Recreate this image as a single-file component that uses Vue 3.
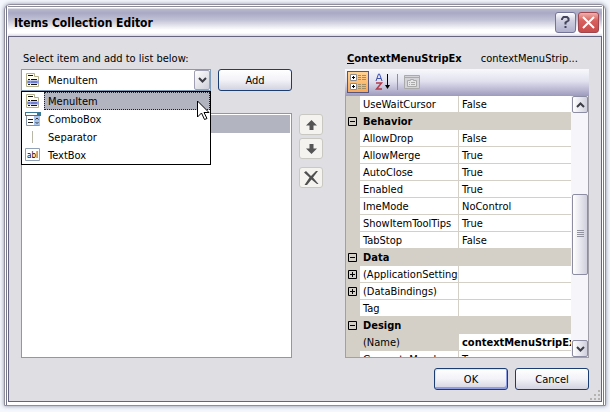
<script setup>
import { ref } from 'vue'

const kinds = [
  { name: 'MenuItem', icon: 'menu' },
  { name: 'ComboBox', icon: 'combo' },
  { name: 'Separator', icon: 'separator' },
  { name: 'TextBox', icon: 'text' },
]
const kind = ref('MenuItem')

const rows = [
  { name: 'UseWaitCursor', value: 'False' },
  { group: 'Behavior' },
  { name: 'AllowDrop', value: 'False' },
  { name: 'AllowMerge', value: 'True' },
  { name: 'AutoClose', value: 'True' },
  { name: 'Enabled', value: 'True' },
  { name: 'ImeMode', value: 'NoControl' },
  { name: 'ShowItemToolTips', value: 'True' },
  { name: 'TabStop', value: 'False' },
  { group: 'Data' },
  { name: '(ApplicationSettings)', value: '', expandable: true },
  { name: '(DataBindings)', value: '', expandable: true },
  { name: 'Tag', value: '' },
  { group: 'Design' },
  { name: '(Name)', value: 'contextMenuStripEx1', readonly: true },
  { name: 'GenerateMember', value: 'True' },
]
</script>

<template>
  <div class="desktop">
    <section class="dialog" role="dialog" aria-labelledby="dialog-title">
      <header class="titlebar">
        <h1 id="dialog-title">Items Collection Editor</h1>
        <button class="caption help" type="button" aria-label="Help">
          <svg width="9" height="13" viewBox="0 0 9 13" fill="none" stroke="#44445e" stroke-width="2">
            <path d="M1 4V3l1.500-2h3.500l1.500 1.500v2L4.500 6.500v2" /><path d="M3.500 11h2" />
          </svg>
        </button>
        <button class="caption close" type="button" aria-label="Close">
          <svg width="13" height="13" viewBox="0 0 13 13" fill="none" stroke="#fff" stroke-width="2">
            <path d="M1 1l11 11M12 1L1 12" />
          </svg>
        </button>
      </header>

      <div class="client">
        <main class="panes">
          <div class="left">
            <label class="caption-text" for="kind">Select item and add to list below:</label>
            <div class="picker">
              <div class="combo">
                <svg class="kind-icon" width="16" height="16" viewBox="0 0 16 16">
                  <path d="M1.500 1.500h8v3h4v10h-12z" fill="#fffef0" stroke="#b5b08c" />
                  <path d="M3 3.500h5M3 7.500h2M6 7.500h6M3 12.500h2M6 12.500h6" stroke="#111" />
                  <path d="M2 10h12" stroke="#8fa0e8" stroke-width="3" /><path d="M3 10h2M6 10h6" stroke="#4a58b8" />
                </svg>
                <select id="kind" v-model="kind">
                  <option v-for="k in kinds" :key="k.name">{{ k.name }}</option>
                </select>
                <span class="drop" aria-hidden="true">
                  <svg width="9" height="6" viewBox="0 0 9 6" fill="none" stroke="#3c3c46" stroke-width="2"><path d="M1 1l3.500 3.500L8 1" /></svg>
                </span>
                <ul class="menu" role="listbox" aria-label="Item types">
                  <li v-for="k in kinds" :key="k.name" role="option" :aria-selected="k.name === kind">
                    <svg class="kind-icon" width="16" height="16" viewBox="0 0 16 16">
                      <g v-if="k.icon === 'menu'">
                        <path d="M1.500 1.500h8v3h4v10h-12z" fill="#fffef0" stroke="#b5b08c" />
                        <path d="M3 3.500h5M3 7.500h2M6 7.500h6M3 12.500h2M6 12.500h6" stroke="#111" />
                        <path d="M2 10h12" stroke="#8fa0e8" stroke-width="3" /><path d="M3 10h2M6 10h6" stroke="#4a58b8" />
                      </g>
                      <g v-else-if="k.icon === 'combo'">
                        <path d="M1.500 4.500h13v10h-13z" fill="#fff" stroke="#8794a8" />
                        <path d="M0 1h16v4H0z" fill="#397795" /><path d="M1 3h11" stroke="#fff" stroke-width="2" />
                        <path d="M9 5h6v9H9z" fill="#a9c5ee" />
                        <path d="M3 8.500h5M3 11.500h5" stroke="#222" />
                        <path d="M10.500 8.500L12 7l1.500 1.500M10.500 11L12 12.500l1.500-1.500" fill="none" stroke="#333" />
                      </g>
                      <path v-else-if="k.icon === 'separator'" d="M7.500 2v12" stroke="#b9b7a7" />
                      <g v-else>
                        <path d="M.5 1.500h14v12H.5z" fill="#fff" stroke="#91a0b4" />
                        <text x="2" y="11" class="abl">abl</text>
                      </g>
                    </svg>
                    <span>{{ k.name }}</span>
                  </li>
                </ul>
                <svg class="pointer" width="13" height="21" viewBox="0 0 13 21">
                  <path d="M.5 1v16l4-4 3 6.500 2.500-1-3-6h5z" fill="#fff" stroke="#000" />
                </svg>
              </div>
              <button class="push" type="button">Add</button>
            </div>
            <div class="items" role="listbox" aria-label="Items"><div class="item" role="option" aria-selected="true"></div></div>
          </div>

          <div class="moves">
            <button type="button" aria-label="Move up">
              <svg width="11" height="10" viewBox="0 0 11 10"><path d="M5.500 0L11 5.500H7.500V10h-4V5.500H0z" fill="#555" /></svg>
            </button>
            <button type="button" aria-label="Move down">
              <svg width="11" height="10" viewBox="0 0 11 10"><path d="M5.500 10L0 4.500h3.500V0h4v4.500H11z" fill="#555" /></svg>
            </button>
            <button class="remove" type="button" aria-label="Remove">
              <svg width="15" height="14" viewBox="0 0 15 14"><path d="M0 1.500L2 0l5 5 5-5h2L9 6.500l5.500 6.500H13L7.500 8.500 3 14H.5l5-7.500z" fill="#505050" /></svg>
            </button>
          </div>

          <div class="right">
            <div class="caption-text subject"><b><u>C</u>ontextMenuStripEx</b><span>contextMenuStrip...</span></div>
            <div class="toolbar">
              <button class="tool active" type="button" aria-label="Categorized">
                <svg width="18" height="18" viewBox="0 0 18 18" fill="none">
                  <path d="M1.500 1.500h6v6h-6zM1.500 10.500h6v6h-6z" fill="#fff" stroke="#8a8a90" />
                  <path d="M3 4.500h3M4.500 3v3M3 13.500h3M4.500 12v3" stroke="#000" />
                  <path d="M9 2.500h3M13 2.500h4M9 4.500h3M13 4.500h4M9 6.500h3M13 6.500h4M9 11.500h3M13 11.500h4M9 13.500h3M13 13.500h4M9 15.500h3M13 15.500h4" stroke="#a08d68" />
                </svg>
              </button>
              <button class="tool" type="button" aria-label="Alphabetical">
                <svg width="16" height="18" viewBox="0 0 16 18" fill="none">
                  <path d="M1 8l2.500-7h1L7 8M2 5.500h4" stroke="#3c50b0" />
                  <path d="M1 10h5.500L1.500 16H7" stroke="#b23a4a" stroke-width="1.500" />
                  <path d="M12.500 1v14" stroke="#000" /><path d="M10 12h5l-2.500 4z" fill="#000" />
                </svg>
              </button>
              <span class="divider"></span>
              <button class="tool" type="button" aria-label="Property pages" disabled>
                <svg width="16" height="16" viewBox="0 0 16 16" fill="none" stroke="#aaa">
                  <path d="M.5 1.500h15v13H.5z" fill="#d4d4d8" /><path d="M1 3.500h14" /><path d="M3.500 6.500h3v-1h3v1h3v6h-9z" fill="#e6e6e8" /><path d="M5 8.500h1M7 8.500h4M5 10.500h1M7 10.500h4" />
                </svg>
              </button>
            </div>
            <div class="grid">
              <div class="viewport">
                <table aria-label="Properties">
                  <colgroup><col class="c-mark"><col class="c-name"><col></colgroup>
                  <tbody>
                    <tr v-for="row in rows" :key="row.group || row.name" :class="{ group: row.group, readonly: row.readonly }">
                      <td class="mark">
                        <svg v-if="row.group || row.expandable" width="9" height="9" viewBox="0 0 9 9" fill="none" stroke="#000">
                          <path d="M.5.5h8v8h-8zM2 4.500h5" /><path v-if="row.expandable" d="M4.500 2v5" />
                        </svg>
                      </td>
                      <th v-if="row.group" colspan="2" scope="rowgroup">{{ row.group }}</th>
                      <template v-else>
                        <th scope="row">{{ row.name }}</th>
                        <td class="value">{{ row.value }}</td>
                      </template>
                    </tr>
                  </tbody>
                </table>
              </div>
              <div class="scroll">
                <button type="button" aria-label="Scroll up"><svg width="9" height="6" viewBox="0 0 9 6" fill="none" stroke="#3c3c46" stroke-width="2"><path d="M1 5l3.500-3.500L8 5" /></svg></button>
                <div class="track"><div class="thumb"><i></i></div></div>
                <button type="button" aria-label="Scroll down"><svg width="9" height="6" viewBox="0 0 9 6" fill="none" stroke="#3c3c46" stroke-width="2"><path d="M1 1l3.500 3.500L8 1" /></svg></button>
              </div>
            </div>
          </div>
        </main>

        <footer class="actions">
          <button class="push default" type="button">OK</button>
          <button class="push" type="button">Cancel</button>
        </footer>
        <svg class="grip" width="12" height="12" viewBox="0 0 12 12" aria-hidden="true">
          <path d="M9 1h2v2H9zM5 5h2v2H5zM9 5h2v2H9zM1 9h2v2H1zM5 9h2v2H5zM9 9h2v2H9z" fill="#b5b3b0" />
        </svg>
      </div>
    </section>
  </div>
</template>

<style>
body { background: #f4f7fd; }
</style>

<style scoped>
* { box-sizing: border-box; }
.desktop {
  height: 100vh;
  padding: 4px 4px 6px;
  font: 11px/17px "DejaVu Sans Condensed", "DejaVu Sans", sans-serif;
  color: #000;
}
button, select { font: inherit; color: inherit; padding: 0; }
button { display: flex; align-items: center; justify-content: center; }
svg { display: block; flex: none; }
.dialog {
  height: 100%;
  display: flex;
  flex-direction: column;
  border: 1px solid #8e8e9c;
  border-radius: 6px 6px 0 0;
  padding: 1px 3px 3px;
  background: linear-gradient(90deg, #fff 1px, #77778b 1px 2px, #fff 2px calc(100% - 2px), #77778b calc(100% - 2px) calc(100% - 1px), #fff calc(100% - 1px));
  box-shadow: 0 0 4px #8a8fa0;
}
.titlebar {
  height: 30px;
  flex: none;
  display: flex;
  align-items: center;
  gap: 2px;
  padding: 2px 3px 0 6px;
  background: linear-gradient(#8c8c96 0 1px, #fff 1px 2px, #b9b9cc 3px, #a9a9c6 7px, #c2c2d6 14px, #fff 24px, #fff 27px, #d8d8e4 30px);
}
h1 { flex: 1; margin: 0; padding-top: 2px; font-size: 12px; line-height: 20px; }
.caption {
  width: 21px;
  height: 21px;
  border: 1px solid #747499;
  border-radius: 3px;
  background: linear-gradient(#fff, #d0d0e2 40%, #b1b1ce);
}
.close { border-color: #9e4650; background: linear-gradient(#efb0ac, #d9605d 40%, #c64b4b); }
.client {
  position: relative;
  flex: 1;
  min-height: 0;
  display: flex;
  flex-direction: column;
  border: 1px solid #65657f;
  background: #dfdee3;
  padding: 13px 12px 11px;
}
.panes {
  flex: 1;
  min-height: 0;
  display: grid;
  grid-template-columns: minmax(0, 271fr) 24px minmax(0, 259fr);
  grid-template-rows: minmax(0, 1fr);
  column-gap: 7px;
}
.left, .right { display: flex; flex-direction: column; min-height: 0; }
.right { margin-left: 15px; }
.caption-text { height: 19px; white-space: nowrap; }
.left .caption-text { padding-left: 2px; }
.picker { display: flex; gap: 7px; }
.combo {
  position: relative;
  flex: 1;
  height: 22px;
  display: flex;
  align-items: center;
  border: 1px solid #7f9db9;
  background: #fff;
}
.combo > .kind-icon { margin-left: 3px; }
select { flex: 1; min-width: 0; height: 20px; margin-left: 7px; border: 0; background: none; appearance: none; }
.drop {
  width: 16px;
  height: 20px;
  display: flex;
  align-items: center;
  justify-content: center;
  border: 1px solid #a0a0b4;
  border-radius: 2px;
  background: linear-gradient(135deg, #fff, #ceced9);
}
.menu {
  position: absolute;
  z-index: 1;
  top: 21px;
  left: -1px;
  right: -1px;
  margin: 0;
  padding: 0;
  list-style: none;
  border: 1px solid #000;
  background: #fff;
}
.menu li { display: flex; align-items: center; height: 18px; padding-left: 3px; }
.menu .kind-icon { margin-right: 3px; }
.menu span { flex: 1; height: 18px; line-height: 17px; padding-left: 3px; border: 1px solid transparent; }
.menu li[aria-selected="true"] span { background: #b2b4bf; border: 1px dotted #222; }
.abl { font: 8px "DejaVu Sans Condensed", "DejaVu Sans", sans-serif; }
.pointer { position: absolute; z-index: 2; top: 30px; right: 0; }
.push {
  width: 74px;
  height: 22px;
  border: 1px solid #1c3d72;
  border-radius: 3px;
  background: linear-gradient(#fff, #f2f2f8 50%, #d3d3e0);
}
.items { flex: 1; margin-top: 22px; padding: 1px; border: 1px solid #7f9db9; background: #fff; }
.item { height: 18px; background: #b2b4bf; }
.moves { display: flex; flex-direction: column; gap: 3px; padding-top: 64px; }
.moves button { height: 21px; border: 1px solid #c9c8c2; border-radius: 3px; background: #f4f3ef; }
.moves .remove { margin-top: 5px; }
.subject { display: flex; gap: 19px; padding-left: 2px; }
.toolbar {
  height: 27px;
  flex: none;
  display: flex;
  align-items: center;
  gap: 3px;
  padding: 0 2px 2px;
  background: linear-gradient(#f8f8fc, #e1e1ef 45%, #9d9abd);
}
.tool { width: 22px; height: 22px; border: 1px solid transparent; background: none; }
.active { border-color: #54547c; background: linear-gradient(#ffd393, #f9a857); }
.divider { width: 1px; height: 16px; background: #8d8bae; }
.grid { flex: 1; min-height: 0; display: flex; border: 1px solid #a1a0a8; border-top: 0; background: #fff; }
.viewport { flex: 1; min-width: 0; overflow: hidden; background: #d4d0c8; }
table { width: 100%; table-layout: fixed; border-collapse: separate; border-spacing: 0; }
.c-mark { width: 14px; }
.c-name { width: 99px; }
td, th {
  height: 17px;
  padding: 2px 0 0 3px;
  line-height: 14px;
  font-weight: normal;
  text-align: left;
  vertical-align: top;
  white-space: nowrap;
  overflow: hidden;
  background: #fff;
  border-bottom: 1px solid #d4d0c8;
}
th[scope="row"] { border-right: 1px solid #d4d0c8; }
.mark, .group th, .readonly th { background: #d4d0c8; }
.mark { padding: 4px 0 0 2px; }
.group th, .readonly .value { font-weight: bold; }
.scroll { width: 17px; display: flex; flex-direction: column; background: #f5f5fa; padding-left: 1px; }
.scroll button, .thumb { border: 1px solid #8c8ca2; border-radius: 2px; background: linear-gradient(90deg, #fff, #d0d0de); }
.scroll button { height: 17px; flex: none; }
.track { flex: 1; display: flex; flex-direction: column; }
.track::before { content: ""; flex: 82; }
.track::after { content: ""; flex: 66; }
.thumb { flex: 80; display: flex; align-items: center; justify-content: center; }
.thumb i { width: 7px; height: 8px; background: repeating-linear-gradient(#92929f 0 1px, transparent 1px 2px); }
.actions { display: flex; justify-content: flex-end; gap: 7px; padding-top: 10px; }
.default { box-shadow: inset -1px -2px 0 #8f9ee0, inset 1px 1px 0 #dbe3fb; }
.grip { position: absolute; right: 0; bottom: 0; }
</style>
